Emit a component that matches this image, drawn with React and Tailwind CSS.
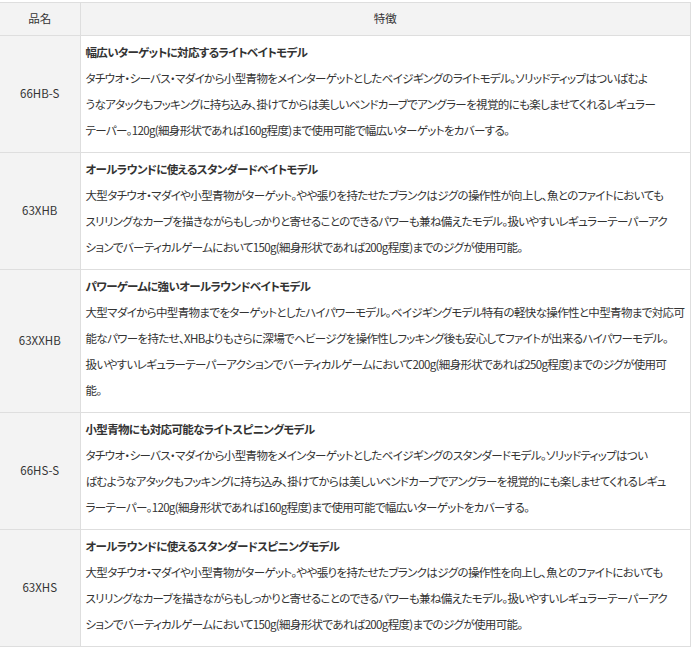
import React from 'react';

const rows = [
  {
    name: '66HB-S',
    title: '幅広いターゲットに対応するライトベイトモデル',
    lines: [
      'タチウオ・シーバス・マダイから小型青物をメインターゲットとしたベイジギングのライトモデル。ソリッドティップはついばむよ',
      'うなアタックもフッキングに持ち込み、掛けてからは美しいベンドカーブでアングラーを視覚的にも楽しませてくれるレギュラー',
      'テーパー。120g(細身形状であれば160g程度)まで使用可能で幅広いターゲットをカバーする。',
    ],
  },
  {
    name: '63XHB',
    title: 'オールラウンドに使えるスタンダードベイトモデル',
    lines: [
      '大型タチウオ・マダイや小型青物がターゲット。やや張りを持たせたブランクはジグの操作性が向上し、魚とのファイトにおいても',
      'スリリングなカーブを描きながらもしっかりと寄せることのできるパワーも兼ね備えたモデル。扱いやすいレギュラーテーパーアク',
      'ションでバーティカルゲームにおいて150g(細身形状であれば200g程度)までのジグが使用可能。',
    ],
  },
  {
    name: '63XXHB',
    title: 'パワーゲームに強いオールラウンドベイトモデル',
    lines: [
      '大型マダイから中型青物までをターゲットとしたハイパワーモデル。ベイジギングモデル特有の軽快な操作性と中型青物まで対応可',
      '能なパワーを持たせ、XHBよりもさらに深場でヘビージグを操作性しフッキング後も安心してファイトが出来るハイパワーモデル。',
      '扱いやすいレギュラーテーパーアクションでバーティカルゲームにおいて200g(細身形状であれば250g程度)までのジグが使用可',
      '能。',
    ],
  },
  {
    name: '66HS-S',
    title: '小型青物にも対応可能なライトスピニングモデル',
    lines: [
      'タチウオ・シーバス・マダイから小型青物をメインターゲットとしたベイジギングのスタンダードモデル。ソリッドティップはつい',
      'ばむようなアタックもフッキングに持ち込み、掛けてからは美しいベンドカーブでアングラーを視覚的にも楽しませてくれるレギュ',
      'ラーテーパー。120g(細身形状であれば160g程度)まで使用可能で幅広いターゲットをカバーする。',
    ],
  },
  {
    name: '63XHS',
    title: 'オールラウンドに使えるスタンダードスピニングモデル',
    lines: [
      '大型タチウオ・マダイや小型青物がターゲット。やや張りを持たせたブランクはジグの操作性を向上し、魚とのファイトにおいても',
      'スリリングなカーブを描きながらもしっかりと寄せることのできるパワーも兼ね備えたモデル。扱いやすいレギュラーテーパーアク',
      'ションでバーティカルゲームにおいて150g(細身形状であれば200g程度)までのジグが使用可能。',
    ],
  },
];

export default function App() {
  return (
    <div className="min-h-[647px] w-[699px] bg-white pt-[2px] font-['Noto_Sans_CJK_JP','Noto_Sans',sans-serif] text-[11.5px] tracking-[-0.65px] text-[#333] [font-feature-settings:'palt']">
      <table className="w-[691px] table-fixed border-collapse">
        <colgroup>
          <col className="w-[80px]" />
          <col />
        </colgroup>
        <thead>
          <tr className="h-[33px] bg-[#f3f3f3]">
            <th className="border border-l-0 border-[#dedede] font-normal tracking-normal">品名</th>
            <th className="border border-[#dedede] font-normal tracking-normal">特徴</th>
          </tr>
        </thead>
        <tbody>
          {rows.map((r) => (
            <tr key={r.name}>
              <td className="border border-l-0 border-[#dedede] bg-[#f3f3f3] text-center tracking-normal">{r.name}</td>
              <td className="overflow-hidden border border-[#dedede] px-[5px] pt-[3px] pb-[9px] leading-[26px]">
                <div className="whitespace-nowrap font-bold">{r.title}</div>
                {r.lines.map((l, i) => (
                  <div key={i} className="whitespace-nowrap">
                    {l}
                  </div>
                ))}
              </td>
            </tr>
          ))}
        </tbody>
      </table>
    </div>
  );
}
